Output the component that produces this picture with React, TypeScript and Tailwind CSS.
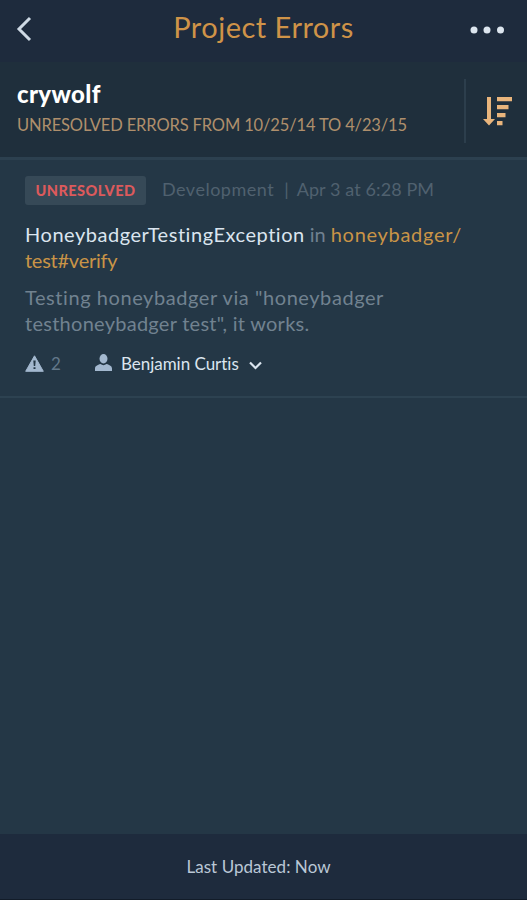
import type { ReactNode } from "react";

interface ProjectError {
  id: number;
  status: string;
  environment: string;
  date: string;
  exception: string;
  component: string;
  action: string;
  message: ReactNode;
  count: number;
  assignee: string;
}

const errors: ProjectError[] = [
  {
    id: 1,
    status: "Unresolved",
    environment: "Development",
    date: "Apr 3 at 6:28 PM",
    exception: "HoneybadgerTestingException",
    component: "honeybadger/",
    action: "test#verify",
    message: (
      <>
        <span className="tracking-[0.57px]">Testing honeybadger via "honeybadger</span>
        <br />
        <span className="tracking-[0.27px]">testhoneybadger test", it works.</span>
      </>
    ),
    count: 2,
    assignee: "Benjamin Curtis",
  },
];

function SortIcon() {
  return (
    <svg width="30" height="30" viewBox="0 0 30 30" fill="#e9b57c">
      <path d="M4 1h4v22h4L6 29.500 0 23h4z" />
      <path d="M14 1h15v4.200H14zM14 9h11.500v4.200H14zM14 17h8.500v4.200H14zM14 25h5.500v4.200H14z" />
    </svg>
  );
}

function WarningIcon() {
  return (
    <svg width="19" height="17" viewBox="0 0 19 17" className="mt-[-1px]">
      <path d="M9.500 .8 18.300 16.300H.7z" fill="#a3b8cf" stroke="#a3b8cf" strokeLinejoin="round" />
      <path d="M8.300 5.500h2.400l-.5 5.500H8.800zM8.500 12.300h2v1.800h-2z" fill="#243746" />
    </svg>
  );
}

function UserIcon() {
  return (
    <svg width="17" height="17" viewBox="0 0 17 17" fill="#a3b8cf" className="mt-[-3px]">
      <ellipse cx="8.500" cy="4.700" rx="4" ry="4.700" />
      <path d="M0 17v-2.500c0-2.500 2.500-3.600 5.500-4.500a5 5 0 0 0 6 0c3 .9 5.500 2 5.500 4.500V17z" />
    </svg>
  );
}

function Header() {
  return (
    <header className="flex h-[62px] shrink-0 items-center justify-between bg-[#1e2b3d] pr-[23px] pl-[16px]">
      <svg width="34" height="26" viewBox="0 0 34 26" fill="none" stroke="#cfdae5" strokeWidth="3" className="mt-[-4px]">
        <path d="M14 2 3 13l11 11" />
      </svg>
      <h1 className="mt-[-8px] ml-[7px] text-[29px] leading-[36px] tracking-[0.48px] whitespace-nowrap text-[#cf9348]">
        Project Errors
      </h1>
      <svg width="34" height="8" viewBox="0 0 34 8" fill="#dce5ee" className="mt-[-3px]">
        <circle cx="4" cy="4" r="3.500" />
        <circle cx="17" cy="4" r="3.500" />
        <circle cx="30.500" cy="4" r="3.500" />
      </svg>
    </header>
  );
}

function ErrorRow({ error }: { error: ProjectError }) {
  return (
    <li className="h-[238px] border-b-2 border-[#2d4251] px-[25px] pt-[16px]">
      <div className="flex items-center text-[18px] leading-[28px] whitespace-nowrap text-[#50616f]">
        <span className="flex h-[29px] w-[121px] items-center justify-center rounded-[3px] bg-[#364957] text-[14.5px] font-black tracking-[0.45px] text-[#dc5a5c] uppercase">
          {error.status}
        </span>
        <span className="mt-[-3px] ml-[16px] tracking-[0.5px]">{error.environment}</span>
        <span className="mt-[-3px] ml-[10px]">|</span>
        <span className="mt-[-3px] ml-[8px] tracking-[0.1px]">{error.date}</span>
      </div>
      <div className="mt-[16px] text-[20px] leading-[26px] whitespace-nowrap text-[#c99447]">
        <span className="tracking-[0.54px] text-[#dbe5ef]">{error.exception}</span>
        <span className="mx-[5px] text-[#708190]">in</span>
        <span className="tracking-[0.7px]">{error.component}</span>
        <br />
        <span className="tracking-[-0.25px]">{error.action}</span>
      </div>
      <p className="mt-[11px] text-[20px] leading-[26px] whitespace-nowrap text-[#718290]">{error.message}</p>
      <div className="mt-[14px] flex h-[28px] items-center">
        <WarningIcon />
        <span className="ml-[7px] text-[17px] text-[#62788a]">{error.count}</span>
        <button className="ml-[34px] flex items-center whitespace-nowrap text-[#dbe5ef]">
          <UserIcon />
          <span className="ml-[9px] text-[17px] tracking-[-0.02px]">{error.assignee}</span>
          <svg width="13" height="9" viewBox="0 0 13 9" fill="none" stroke="#dbe5ef" strokeWidth="2.200" className="mt-[2px] ml-[10px]">
            <path d="m1 1.500 5.500 5.500L12 1.500" />
          </svg>
        </button>
      </div>
    </li>
  );
}

export default function App() {
  return (
    <div className="flex h-[900px] w-[527px] flex-col overflow-hidden bg-[#243746] font-[Lato,sans-serif]">
      <Header />
      <section className="flex h-[98px] shrink-0 justify-between border-b-[3px] border-[#2c404f] bg-[#1f2f3c] pr-[14px] pl-[17px]">
        <div className="whitespace-nowrap">
          <h2 className="mt-[17px] text-[24px] leading-[30px] font-black tracking-[0.35px] text-white">crywolf</h2>
          <p className="mt-[4px] text-[16.5px] leading-[24px] tracking-[-0.14px] text-[#af8f6c] uppercase">
            Unresolved errors from 10/25/14 to 4/23/15
          </p>
        </div>
        <div className="mt-[17px] flex h-[64px] items-center border-l-2 border-[#2c3e4c] pl-[17px]">
          <SortIcon />
        </div>
      </section>
      <ul className="flex-1">
        {errors.map((error) => (
          <ErrorRow key={error.id} error={error} />
        ))}
      </ul>
      <footer className="flex h-[66px] shrink-0 items-center justify-center border-b border-[#121c29] bg-[#1e2b3d] pr-[10px] text-[17px] tracking-[0.05px] text-[#bac7d6]">
        Last Updated: Now
      </footer>
    </div>
  );
}
